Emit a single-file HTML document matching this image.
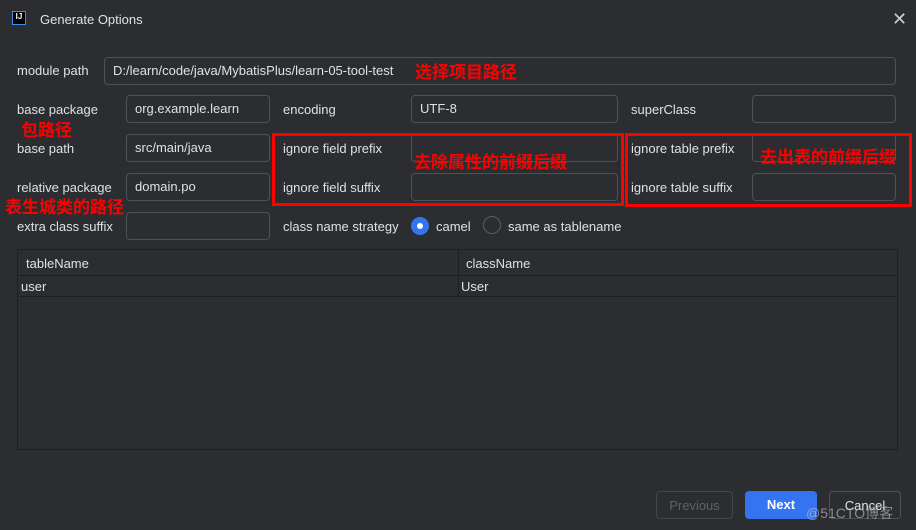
<!DOCTYPE html>
<html><head><meta charset="utf-8"><style>
body{margin:0;width:916px;height:530px;background:#2b2d30;position:relative;overflow:hidden;font-family:"Liberation Sans","Noto Sans CJK SC",sans-serif;color:#dfe1e5;font-size:13px}
.a{position:absolute;white-space:nowrap}
.in{position:absolute;border:1px solid #4e5157;border-radius:4px;box-sizing:border-box;height:28px;padding-left:8px;line-height:26px}
.r{position:absolute;color:#f00;font-weight:bold;font-size:17px;font-family:"Noto Sans CJK SC",sans-serif;white-space:nowrap;line-height:20px}
.box{position:absolute;border:3px solid #f00;box-sizing:border-box}
.btn{position:absolute;height:28px;border-radius:4px;box-sizing:border-box;text-align:center;line-height:28px}
</style></head><body>
<div class="a" style="left:12px;top:11px;width:14px;height:14px;border:1px solid #3b8ff0;background:#000;color:#fff;font-size:8px;font-weight:bold;line-height:10px;text-align:center;box-sizing:border-box">IJ</div>
<div class="a" style="left:40px;top:12px">Generate Options</div>
<div class="a" style="left:892px;top:9px;font-size:18px;color:#ccc">✕</div>

<div class="a" style="left:17px;top:63px">module path</div>
<div class="in" style="left:104px;top:57px;width:792px">D:/learn/code/java/MybatisPlus/learn-05-tool-test</div>
<div class="r" style="left:415px;top:61px">选择项目路径</div>

<div class="a" style="left:17px;top:102px">base package</div>
<div class="in" style="left:126px;top:95px;width:144px">org.example.learn</div>
<div class="a" style="left:283px;top:102px">encoding</div>
<div class="in" style="left:411px;top:95px;width:207px">UTF-8</div>
<div class="a" style="left:631px;top:102px">superClass</div>
<div class="in" style="left:752px;top:95px;width:144px"></div>
<div class="r" style="left:21px;top:119px">包路径</div>

<div class="a" style="left:17px;top:141px">base path</div>
<div class="in" style="left:126px;top:134px;width:144px">src/main/java</div>
<div class="a" style="left:283px;top:141px">ignore field prefix</div>
<div class="in" style="left:411px;top:134px;width:207px"></div>
<div class="a" style="left:631px;top:141px">ignore table prefix</div>
<div class="in" style="left:752px;top:134px;width:144px"></div>

<div class="a" style="left:17px;top:180px">relative package</div>
<div class="in" style="left:126px;top:173px;width:144px">domain.po</div>
<div class="a" style="left:283px;top:180px">ignore field suffix</div>
<div class="in" style="left:411px;top:173px;width:207px"></div>
<div class="a" style="left:631px;top:180px">ignore table suffix</div>
<div class="in" style="left:752px;top:173px;width:144px"></div>

<div class="box" style="left:272px;top:133px;width:352px;height:73px"></div>
<div class="box" style="left:625px;top:133px;width:287px;height:74px"></div>
<div class="r" style="left:414px;top:151px">去除属性的前缀后缀</div>
<div class="r" style="left:760px;top:146px">去出表的前缀后缀</div>
<div class="r" style="left:5px;top:196px">表生城类的路径</div>

<div class="a" style="left:17px;top:219px">extra class suffix</div>
<div class="in" style="left:126px;top:212px;width:144px"></div>
<div class="a" style="left:283px;top:219px">class name strategy</div>
<div class="a" style="left:411px;top:217px;width:18px;height:18px;border-radius:50%;background:#3574f0"><div style="position:absolute;left:6px;top:6px;width:6px;height:6px;border-radius:50%;background:#fff"></div></div>
<div class="a" style="left:436px;top:219px">camel</div>
<div class="a" style="left:483px;top:216px;width:16px;height:16px;border-radius:50%;border:1px solid #5a5d63"></div>
<div class="a" style="left:508px;top:219px">same as tablename</div>

<div class="a" style="left:17px;top:249px;width:881px;height:201px;border:1px solid #1e1f22;box-sizing:border-box"></div>
<div class="a" style="left:18px;top:250px;width:879px;height:25px;border-bottom:1px solid #1e1f22"></div>
<div class="a" style="left:458px;top:250px;width:1px;height:46px;background:#1e1f22"></div>
<div class="a" style="left:18px;top:275px;width:879px;height:21px;border-bottom:1px solid #1e1f22"></div>
<div class="a" style="left:26px;top:256px">tableName</div>
<div class="a" style="left:466px;top:256px">className</div>
<div class="a" style="left:21px;top:279px">user</div>
<div class="a" style="left:461px;top:279px">User</div>

<div class="btn" style="left:656px;top:491px;width:77px;border:1px solid #43454a;color:#5e6166">Previous</div>
<div class="btn" style="left:745px;top:491px;width:72px;background:#3574f0;color:#fff;font-weight:bold">Next</div>
<div class="btn" style="left:829px;top:491px;width:72px;border:1px solid #4e5157">Cancel</div>
<div class="a" style="left:806px;top:503px;color:rgba(200,200,200,0.6);font-size:14px">@51CTO博客</div>
</body></html>
